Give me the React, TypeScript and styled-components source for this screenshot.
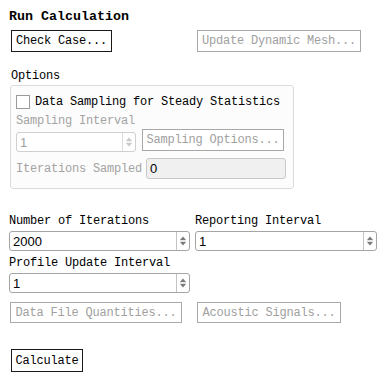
import React from "react";
import styled, { createGlobalStyle } from "styled-components";

const Global = createGlobalStyle`
  html, body { margin: 0; padding: 0; background: #ffffff; }
  body { font-family: "Liberation Mono", "DejaVu Sans Mono", monospace; }
`;

const Page = styled.div`
  display: flex;
  flex-direction: column;
  padding: 8px 0 0 8px;
  width: 383px;
  box-sizing: border-box;
  color: #000;
  & > * { flex-shrink: 0; }
`;

const Title = styled.div`
  font-family: "Liberation Mono", monospace;
  font-weight: bold;
  font-size: 13.33px;
  line-height: 17px;
  height: 16px;
  margin-left: 1px;
`;

const TwoCol = styled.div<{ $top: number }>`
  display: grid;
  grid-template-columns: 187px 182px;
  margin-top: ${(p) => p.$top}px;
  align-items: start;
`;

const Button = styled.button<{ $w: number; $h?: number; $ml?: number; $disabled?: boolean }>`
  display: flex;
  align-items: center;
  justify-content: center;
  box-sizing: border-box;
  width: ${(p) => p.$w}px;
  height: ${(p) => p.$h ?? 22}px;
  margin: 0 0 0 ${(p) => p.$ml ?? 0}px;
  padding: 0;
  background: #ffffff;
  border: 1px solid ${(p) => (p.$disabled ? "#a8a8a8" : "#1a1a1a")};
  border-radius: 0;
  color: ${(p) => (p.$disabled ? "#a0a0a0" : "#000")};
  font-family: "Liberation Mono", monospace;
  font-size: 12px;
  letter-spacing: -0.2px;
  line-height: 14px;
  white-space: nowrap;
`;

const Label = styled.div<{ $ml?: number; $muted?: boolean; $top?: number; $w?: number }>`
  font-family: "Liberation Mono", monospace;
  font-size: 12px;
  letter-spacing: -0.2px;
  line-height: 16px;
  height: 16px;
  white-space: nowrap;
  margin-left: ${(p) => p.$ml ?? 0}px;
  margin-top: ${(p) => p.$top ?? 0}px;
  ${(p) => (p.$w ? `width: ${p.$w}px;` : "")}
  color: ${(p) => (p.$muted ? "#a3a3a3" : "#000")};
`;

const Group = styled.div`
  display: flex;
  flex-direction: column;
  box-sizing: border-box;
  width: 284px;
  height: 104px;
  margin: 1px 0 0 2px;
  padding: 9px 0 0 5px;
  border: 1px solid #dcdcdc;
  border-radius: 3px;
  background: #fcfcfc;
  & > * { flex-shrink: 0; }
`;

const CheckRow = styled.div`
  display: flex;
  align-items: center;
  gap: 5px;
  height: 14px;
`;

const CheckBox = styled.span`
  display: inline-block;
  box-sizing: border-box;
  width: 14px;
  height: 14px;
  border: 1px solid #9a9a9a;
  background: #fff;
`;

const Row = styled.div<{ $top: number }>`
  display: flex;
  align-items: flex-start;
  margin-top: ${(p) => p.$top}px;
`;

const SpinBox = styled.div<{ $w: number; $ml?: number; $mt?: number; $disabled?: boolean }>`
  display: flex;
  box-sizing: border-box;
  width: ${(p) => p.$w}px;
  height: 20px;
  margin-left: ${(p) => p.$ml ?? 0}px;
  margin-top: ${(p) => p.$mt ?? 0}px;
  border: 1px solid ${(p) => (p.$disabled ? "#cfcfcf" : "#a5a5a5")};
  border-radius: 3px;
  background: #fff;
  flex-shrink: 0;
`;

const SpinValue = styled.div<{ $disabled?: boolean }>`
  flex: 1;
  display: flex;
  align-items: center;
  padding-left: 3px;
  font-family: "Liberation Sans", Arial, sans-serif;
  font-size: 13px;
  color: ${(p) => (p.$disabled ? "#a0a0a0" : "#000")};
`;

const SpinArrows = styled.div<{ $disabled?: boolean }>`
  width: 12px;
  display: flex;
  align-items: center;
  justify-content: center;
  border-left: 1px solid ${(p) => (p.$disabled ? "#dcdcdc" : "#c4c4c4")};
`;

const TextField = styled.div`
  display: flex;
  align-items: center;
  box-sizing: border-box;
  width: 140px;
  height: 21px;
  padding-left: 3px;
  border: 1px solid #c8c8c8;
  border-radius: 3px;
  background: #f0f0f0;
  font-family: "Liberation Sans", Arial, sans-serif;
  font-size: 13px;
  color: #000;
`;

const InlineRow = styled.div<{ $top: number }>`
  display: flex;
  align-items: center;
  margin-top: ${(p) => p.$top}px;
`;

const Col = styled.div`
  display: flex;
  flex-direction: column;
`;

function Arrows({ disabled }: { disabled?: boolean }) {
  const c = disabled ? "#c8c8c8" : "#7a7a7a";
  return (
    <svg width="8" height="12" viewBox="0 0 8 12">
      <path d="M4 1.5 L7 5 L1 5 Z" fill={c} />
      <rect x="1" y="5.6" width="6" height="0.8" fill={disabled ? "#e0e0e0" : "#c0c0c0"} />
      <path d="M4 10.5 L7 7 L1 7 Z" fill={c} />
    </svg>
  );
}

function Spinner({ value, w, ml, mt, disabled }: { value: string; w: number; ml?: number; mt?: number; disabled?: boolean }) {
  return (
    <SpinBox $w={w} $ml={ml} $mt={mt} $disabled={disabled}>
      <SpinValue $disabled={disabled}>{value}</SpinValue>
      <SpinArrows $disabled={disabled}>
        <Arrows disabled={disabled} />
      </SpinArrows>
    </SpinBox>
  );
}

export default function App() {
  return (
    <>
      <Global />
      <Page>
        <Title>Run Calculation</Title>
        <TwoCol $top={6}>
          <Button $w={101} $ml={3}>Check Case...</Button>
          <Button $w={164} $ml={2} $disabled>Update Dynamic Mesh...</Button>
        </TwoCol>
        <Label $ml={3} $top={16}>Options</Label>
        <Group>
          <CheckRow>
            <CheckBox />
            <Label>Data Sampling for Steady Statistics</Label>
          </CheckRow>
          <Label $muted $top={4}>Sampling Interval</Label>
          <Row $top={0}>
            <Spinner value="1" w={120} mt={3} disabled />
            <Button $w={142} $ml={6} $disabled>Sampling Options...</Button>
          </Row>
          <InlineRow $top={6}>
            <Label $muted $w={130}>Iterations Sampled</Label>
            <TextField>0</TextField>
          </InlineRow>
        </Group>
        <TwoCol $top={24}>
          <Col>
            <Label $ml={1}>Number of Iterations</Label>
            <Spinner value="2000" w={181} ml={1} mt={2} />
          </Col>
          <Col>
            <Label>Reporting Interval</Label>
            <Spinner value="1" w={182} mt={2} />
          </Col>
        </TwoCol>
        <Label $ml={1} $top={4}>Profile Update Interval</Label>
        <Spinner value="1" w={181} ml={1} mt={2} />
        <TwoCol $top={9}>
          <Button $w={172} $h={21} $ml={2} $disabled>Data File Quantities...</Button>
          <Button $w={144} $h={21} $ml={2} $disabled>Acoustic Signals...</Button>
        </TwoCol>
        <Row $top={26}>
          <Button $w={72} $h={23} $ml={3}>Calculate</Button>
        </Row>
      </Page>
    </>
  );
}
